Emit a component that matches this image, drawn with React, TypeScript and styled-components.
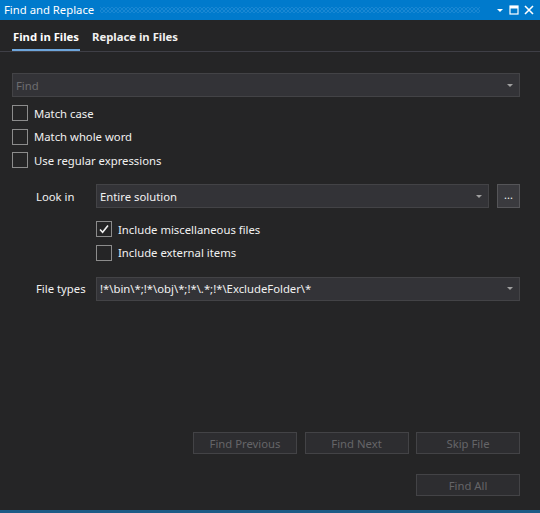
import styled, { createGlobalStyle } from 'styled-components';

const GlobalStyle = createGlobalStyle`
  html, body {
    margin: 0;
    padding: 0;
    background: #252526;
  }
  * { box-sizing: border-box; }
`;

const Window = styled.div`
  width: 540px;
  height: 513px;
  display: flex;
  flex-direction: column;
  background: #252526;
  font-family: "Noto Sans", "Open Sans", sans-serif;
  font-size: 11.3px;
  color: #f1f1f1;
  border-bottom: 3px solid #1d5b86;
  overflow: hidden;
`;

const TitleBar = styled.div`
  height: 20px;
  flex: none;
  display: flex;
  align-items: center;
  background: #007acc;
  color: #ffffff;
  padding: 0 6px 0 4px;
  gap: 6px;
`;

const Title = styled.span`
  font-size: 11.3px;
  white-space: nowrap;
  line-height: 20px;
`;

const Grip = styled.div`
  flex: 1;
  height: 6px;
  margin-right: 10px;
  background-image:
    radial-gradient(circle, rgba(150, 205, 245, 0.55) 0.5px, transparent 0.8px),
    radial-gradient(circle, rgba(150, 205, 245, 0.55) 0.5px, transparent 0.8px);
  background-size: 4px 4px;
  background-position: 0 0, 2px 2px;
`;

const TitleButtons = styled.div`
  display: flex;
  align-items: center;
  gap: 5px;
`;

const TabBar = styled.div`
  height: 32px;
  flex: none;
  display: flex;
  align-items: stretch;
  gap: 11px;
  padding-left: 12px;
  border-bottom: 1px solid #3f3f46;
`;

const Tab = styled.div<{ $active?: boolean }>`
  display: flex;
  align-items: center;
  padding: 4px 1px 0;
  font-weight: 700;
  font-size: 11.3px;
  color: ${(p) => (p.$active ? '#ffffff' : '#f1f1f1')};
  border-bottom: 2px solid ${(p) => (p.$active ? '#6ea6dc' : 'transparent')};
`;

const Content = styled.div`
  flex: 1;
  display: flex;
  flex-direction: column;
  padding: 21px 20px 14px 12px;
`;

const Combo = styled.div<{ $grow?: boolean }>`
  height: 24px;
  display: flex;
  align-items: center;
  background: #333337;
  border: 1px solid #434346;
  padding: 0 6px 0 3px;
  color: #f1f1f1;
  flex: ${(p) => (p.$grow ? 1 : 'none')};
  min-width: 0;
`;

const ComboText = styled.span<{ $placeholder?: boolean }>`
  flex: 1;
  white-space: nowrap;
  overflow: hidden;
  color: ${(p) => (p.$placeholder ? '#6d6d70' : '#f1f1f1')};
`;

const Arrow = styled.span`
  width: 0;
  height: 0;
  border-left: 3px solid transparent;
  border-right: 3px solid transparent;
  border-top: 3px solid #a0a0a0;
  flex: none;
`;

const CheckList = styled.div<{ $top: number }>`
  display: flex;
  flex-direction: column;
  gap: 7.5px;
  margin-top: ${(p) => p.$top}px;
`;

const CheckRow = styled.label`
  display: flex;
  align-items: center;
  gap: 6px;
  height: 16px;
`;

const Box = styled.span`
  width: 16px;
  height: 16px;
  flex: none;
  border: 1px solid #8c8c8c;
  background: #252526;
  display: flex;
  align-items: center;
  justify-content: center;
`;

const OptionRow = styled.div<{ $top: number }>`
  display: flex;
  align-items: center;
  margin-top: ${(p) => p.$top}px;
  padding-left: 24px;
  gap: 8px;
`;

const Label = styled.span`
  width: 52px;
  flex: none;
  white-space: nowrap;
`;

const BrowseButton = styled.div`
  width: 23px;
  height: 24px;
  flex: none;
  background: #3a3a3e;
  border: 1px solid #555558;
  display: flex;
  align-items: center;
  justify-content: center;
  color: #f1f1f1;
  font-size: 11px;
  line-height: 1;
  padding-bottom: 3px;
`;

const Indented = styled.div`
  padding-left: 84px;
`;

const Spacer = styled.div`
  flex: 1;
`;

const ButtonRow = styled.div<{ $top?: number }>`
  display: flex;
  justify-content: flex-end;
  gap: 7.5px;
  margin-top: ${(p) => p.$top ?? 0}px;
`;

const Button = styled.div`
  width: 104px;
  height: 22px;
  display: flex;
  align-items: center;
  justify-content: center;
  background: #2d2d30;
  border: 1px solid #434346;
  color: #656568;
`;

const Check = () => (
  <svg width="12" height="12" viewBox="0 0 12 12">
    <path d="M2 6.5 L4.6 9.2 L10 2.5" fill="none" stroke="#f1f1f1" strokeWidth="1.6" />
  </svg>
);

const Checkbox = ({ label, checked }: { label: string; checked?: boolean }) => (
  <CheckRow>
    <Box>{checked && <Check />}</Box>
    <span>{label}</span>
  </CheckRow>
);

export default function App() {
  return (
    <>
      <GlobalStyle />
      <Window>
        <TitleBar>
          <Title>Find and Replace</Title>
          <Grip />
          <TitleButtons>
            <svg width="8" height="8" viewBox="0 0 8 8">
              <path d="M1 3 H7 L4 6 Z" fill="#ffffff" />
            </svg>
            <svg width="10" height="10" viewBox="0 0 10 10">
              <rect x="1" y="1" width="8" height="8" fill="none" stroke="#ffffff" strokeWidth="1.2" />
              <rect x="1" y="1" width="8" height="2.5" fill="#ffffff" />
            </svg>
            <svg width="10" height="10" viewBox="0 0 10 10">
              <path d="M1 1 L9 9 M9 1 L1 9" stroke="#ffffff" strokeWidth="1.6" />
            </svg>
          </TitleButtons>
        </TitleBar>
        <TabBar>
          <Tab $active>Find in Files</Tab>
          <Tab>Replace in Files</Tab>
        </TabBar>
        <Content>
          <Combo>
            <ComboText $placeholder>Find</ComboText>
            <Arrow />
          </Combo>
          <CheckList $top={8}>
            <Checkbox label="Match case" />
            <Checkbox label="Match whole word" />
            <Checkbox label="Use regular expressions" />
          </CheckList>
          <OptionRow $top={16}>
            <Label>Look in</Label>
            <Combo $grow>
              <ComboText>Entire solution</ComboText>
              <Arrow />
            </Combo>
            <BrowseButton>...</BrowseButton>
          </OptionRow>
          <Indented>
            <CheckList $top={13}>
              <Checkbox label="Include miscellaneous files" checked />
              <Checkbox label="Include external items" />
            </CheckList>
          </Indented>
          <OptionRow $top={16}>
            <Label>File types</Label>
            <Combo $grow>
              <ComboText>!*\bin\*;!*\obj\*;!*\.*;!*\ExcludeFolder\*</ComboText>
              <Arrow />
            </Combo>
          </OptionRow>
          <Spacer />
          <ButtonRow>
            <Button>Find Previous</Button>
            <Button>Find Next</Button>
            <Button>Skip File</Button>
          </ButtonRow>
          <ButtonRow $top={20}>
            <Button>Find All</Button>
          </ButtonRow>
        </Content>
      </Window>
    </>
  );
}
